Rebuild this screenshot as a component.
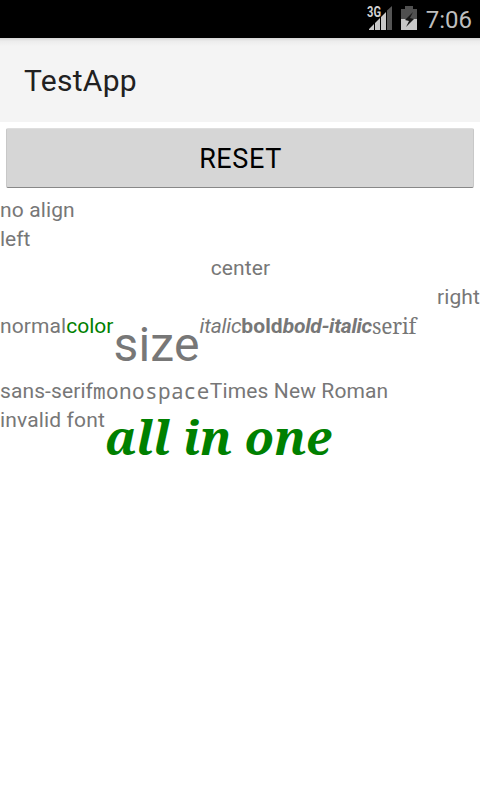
<div class="screen">
  <header class="status">
    <svg class="signal" width="26" height="24" viewBox="0 0 26 24">
      <path d="M20 4.5L25 0V24H20Z" fill="#555" />
      <path d="M14 11L19 6V24H14ZM8 17L13 12V24H8ZM2 23L7 18V24H2Z" fill="#c8c8c8" />
      <text x="0" y="11" font-size="14" font-weight="700" fill="#d2d2d2" textLength="14" lengthAdjust="spacingAndGlyphs">3G</text>
    </svg>
    <svg class="battery" width="16" height="24" viewBox="0 0 16 24">
      <path d="M4 0h8v3h4v10H0V3h4z" fill="#505050" />
      <path d="M0 13h16v11H0z" fill="#c8c8c8" />
      <path d="M12 6L4 14l4 1-3 6 8-8-4-1z" fill="#181818" />
    </svg>
    <span class="clock">7:06</span>
  </header>
  <div class="appbar"><span>TestApp</span></div>
  <main>
    <button>RESET</button>
    <div class="line noalign">no align</div>
    <div class="line">left</div>
    <div class="line center">center</div>
    <div class="line right">right</div>
    <div class="row tall"><span class="normal">normal</span><span class="green">color</span><span class="size">size</span><i class="italic">italic</i><b class="bold">bold</b><b class="bolditalic"><i>bold-italic</i></b><span class="serif">serif</span></div>
    <div class="row"><span class="sans">sans-serif</span><span class="mono">monospace</span><span class="times">Times New Roman</span></div>
    <div class="row"><span class="invalid">invalid font</span><span class="all">all in one</span></div>
  </main>
</div>

<style>
  :global(body) { margin: 0; background: #fff; }
  .screen { height: 800px; overflow: hidden; background: #fff; font-family: Roboto, sans-serif; color: #777; }
  .status { height: 38px; background: #000; display: flex; align-items: flex-start; justify-content: flex-end; padding: 6px 8px 0 0; box-sizing: border-box; }
  .signal { margin-right: 8px; overflow: visible; }
  .battery { margin-right: 9px; }
  .clock { font-size: 24px; color: #bebebe; line-height: 28px; }
  .appbar { height: 84px; box-sizing: border-box; background: linear-gradient(#d4d4d4, #ececec 3px, #f4f4f4 8px); color: #212121; font-size: 30px; line-height: 86px; padding-left: 24px; letter-spacing: .3px; }
  main { padding-top: 6px; }
  button { display: block; width: 468px; height: 60px; margin: 0 6px 8px; padding: 1px 0 0; border: 1px solid #c8c8c8; border-top-color: #dedede; border-bottom-color: #888; border-radius: 2px; background: #d6d6d6; font: 27px Roboto, sans-serif; letter-spacing: .6px; text-indent: 1px; color: #000; }
  .line { height: 29px; font-size: 21px; line-height: 29px; }
  .noalign { letter-spacing: .12px; }
  .center { text-align: center; letter-spacing: .1px; text-indent: 1px; }
  .right { text-align: right; letter-spacing: .1px; }
  .row { display: flex; align-items: flex-start; height: 29px; font-size: 21px; line-height: 29px; white-space: nowrap; }
  .tall { height: 65px; }
  .normal { letter-spacing: .1px; }
  .green { color: #008000; }
  .size { font-size: 48px; line-height: 65px; letter-spacing: .2px; }
  .italic { letter-spacing: -.25px; }
  .bold { letter-spacing: .1px; }
  .bolditalic { letter-spacing: -.3px; }
  .serif { font-family: "Noto Serif", "DejaVu Serif", serif; letter-spacing: -.15px; }
  .sans { letter-spacing: .1px; }
  .mono { font-family: "Droid Sans Mono", "Noto Sans Mono", "DejaVu Sans Mono", monospace; letter-spacing: .38px; }
  .times { letter-spacing: .12px; }
  .invalid { letter-spacing: .15px; }
  .all { font: italic bold 48px/61px "Noto Serif", "DejaVu Serif", serif; letter-spacing: -.1px; color: #008000; }
</style>
